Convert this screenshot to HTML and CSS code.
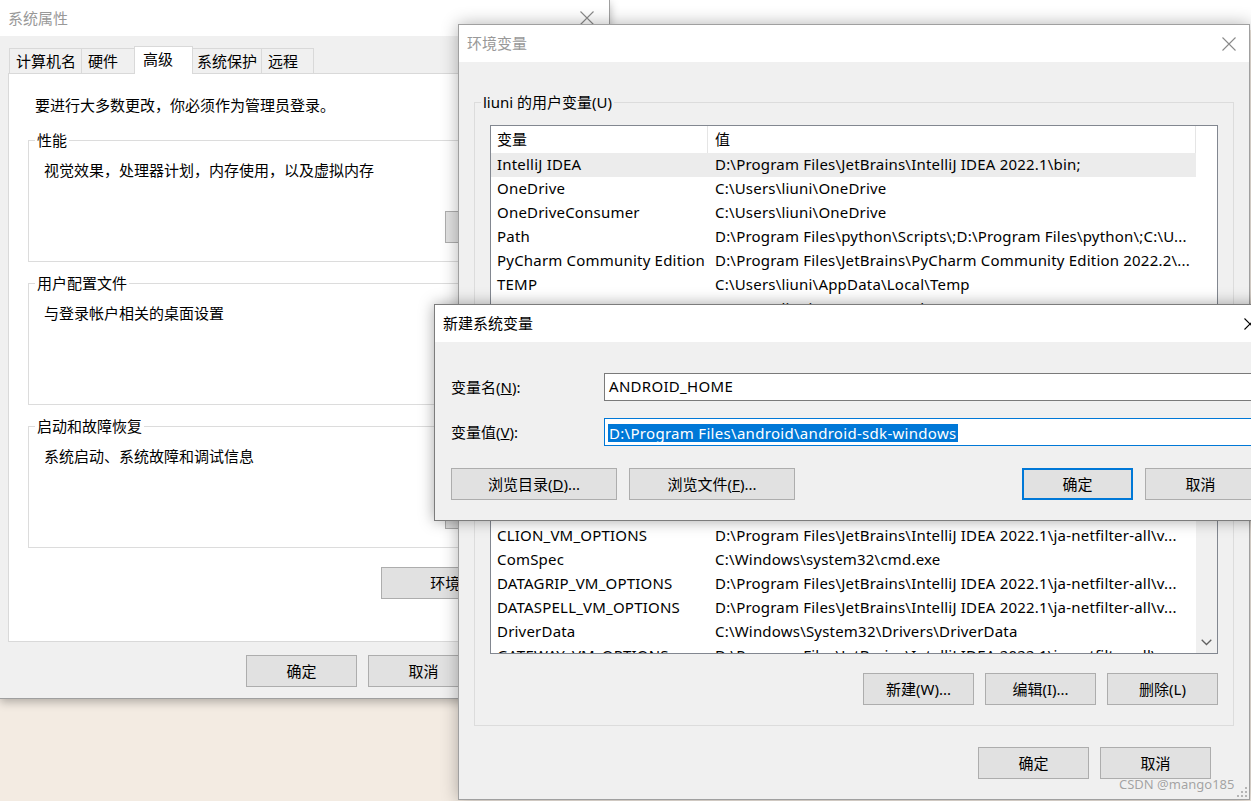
FILE: index.html
```html
<!DOCTYPE html>
<html lang="zh-CN">
<head>
<meta charset="utf-8">
<title>环境变量</title>
<link rel="stylesheet" href="styles.css">
</head>
<body>
<div class="backdrop-strip"></div>

<section class="win win-sys">
  <header class="titlebar tb-sys inactive">
    <span class="title">系统属性</span>
    <span class="close"><svg width="14" height="14" viewBox="0 0 14 14"><path d="M0.5 0.5L13.5 13.5M13.5 0.5L0.5 13.5" stroke="#8a8a8a" stroke-width="1.1" fill="none"/></svg></span>
  </header>
  <div class="sys-body">
    <nav class="tabs">
      <span class="tab tw1">计算机名</span>
      <span class="tab tw2">硬件</span>
      <span class="tab tab-sel">高级</span>
      <span class="tab tw4">系统保护</span>
      <span class="tab tw5">远程</span>
    </nav>
    <div class="tabpanel">
      <p class="note">要进行大多数更改，你必须作为管理员登录。</p>
      <fieldset class="group">
        <legend>性能</legend>
        <p class="gtext">视觉效果，处理器计划，内存使用，以及虚拟内存</p>
        <div class="gbtn-row"><button class="btn">设置(S)...</button></div>
      </fieldset>
      <fieldset class="group">
        <legend>用户配置文件</legend>
        <p class="gtext">与登录帐户相关的桌面设置</p>
        <div class="gbtn-row"><button class="btn">设置(E)...</button></div>
      </fieldset>
      <fieldset class="group group-last">
        <legend>启动和故障恢复</legend>
        <p class="gtext">系统启动、系统故障和调试信息</p>
        <div class="gbtn-row"><button class="btn">设置(T)...</button></div>
      </fieldset>
      <div class="env-row"><button class="btn btn-env">环境变量(N)...</button></div>
    </div>
    <div class="sys-buttons">
      <button class="btn">确定</button>
      <button class="btn">取消</button>
      <button class="btn">应用(A)</button>
    </div>
  </div>
</section>

<section class="win win-env">
  <header class="titlebar tb-env inactive">
    <span class="title">环境变量</span>
    <span class="close"><svg width="14" height="14" viewBox="0 0 14 14"><path d="M0.5 0.5L13.5 13.5M13.5 0.5L0.5 13.5" stroke="#8a8a8a" stroke-width="1.1" fill="none"/></svg></span>
  </header>
  <div class="env-body">
    <fieldset class="egroup eg-user">
      <legend>liuni 的用户变量(U)</legend>
      <div class="list list-user">
        <div class="lhead"><span class="c1">变量</span><span class="c2">值</span><span class="c3"></span></div>
        <div class="lbody">
          <div class="rows">
            <div class="row sel"><span class="c1">IntelliJ IDEA</span><span class="c2">D:\Program Files\JetBrains\IntelliJ IDEA 2022.1\bin;</span></div>
            <div class="row"><span class="c1">OneDrive</span><span class="c2">C:\Users\liuni\OneDrive</span></div>
            <div class="row"><span class="c1">OneDriveConsumer</span><span class="c2">C:\Users\liuni\OneDrive</span></div>
            <div class="row"><span class="c1">Path</span><span class="c2">D:\Program Files\python\Scripts\;D:\Program Files\python\;C:\U...</span></div>
            <div class="row"><span class="c1">PyCharm Community Edition</span><span class="c2">D:\Program Files\JetBrains\PyCharm Community Edition 2022.2\...</span></div>
            <div class="row"><span class="c1">TEMP</span><span class="c2">C:\Users\liuni\AppData\Local\Temp</span></div>
            <div class="row"><span class="c1">TMP</span><span class="c2">C:\Users\liuni\AppData\Local\Temp</span></div>
          </div>
          <div class="vscroll"></div>
        </div>
      </div>
      <div class="ebtn-row">
        <button class="btn">新建(N)...</button>
        <button class="btn">编辑(E)...</button>
        <button class="btn">删除(D)</button>
      </div>
    </fieldset>
    <fieldset class="egroup eg-sys">
      <legend>系统变量(S)</legend>
      <div class="list list-sys">
        <div class="lhead"><span class="c1">变量</span><span class="c2">值</span><span class="c3"></span></div>
        <div class="lbody">
          <div class="rows">
            <div class="row"><span class="c1">ChocolateyInstall</span><span class="c2">C:\ProgramData\chocolatey</span></div>
            <div class="row"><span class="c1">CLASSPATH</span><span class="c2">.;%JAVA_HOME%\lib;%JAVA_HOME%\lib\tools.jar</span></div>
            <div class="row"><span class="c1">CLION_VM_OPTIONS</span><span class="c2">D:\Program Files\JetBrains\IntelliJ IDEA 2022.1\ja-netfilter-all\v...</span></div>
            <div class="row"><span class="c1">ComSpec</span><span class="c2">C:\Windows\system32\cmd.exe</span></div>
            <div class="row"><span class="c1">DATAGRIP_VM_OPTIONS</span><span class="c2">D:\Program Files\JetBrains\IntelliJ IDEA 2022.1\ja-netfilter-all\v...</span></div>
            <div class="row"><span class="c1">DATASPELL_VM_OPTIONS</span><span class="c2">D:\Program Files\JetBrains\IntelliJ IDEA 2022.1\ja-netfilter-all\v...</span></div>
            <div class="row"><span class="c1">DriverData</span><span class="c2">C:\Windows\System32\Drivers\DriverData</span></div>
            <div class="row"><span class="c1">GATEWAY_VM_OPTIONS</span><span class="c2">D:\Program Files\JetBrains\IntelliJ IDEA 2022.1\ja-netfilter-all\v...</span></div>
          </div>
          <div class="vscroll vscroll-sys">
            <svg class="chev" width="11" height="7" viewBox="0 0 11 7"><path d="M0.7 0.7L5.5 5.5L10.3 0.7" stroke="#606060" stroke-width="1.3" fill="none"/></svg>
          </div>
        </div>
      </div>
      <div class="ebtn-row">
        <button class="btn">新建(W)...</button>
        <button class="btn">编辑(I)...</button>
        <button class="btn">删除(L)</button>
      </div>
    </fieldset>
    <div class="ok-row">
      <button class="btn">确定</button>
      <button class="btn">取消</button>
    </div>
  </div>
  <span class="grip"><svg width="12" height="12" viewBox="0 0 12 12"><g fill="#b5b5b5"><rect x="9" y="1" width="2" height="2"/><rect x="5" y="5" width="2" height="2"/><rect x="9" y="5" width="2" height="2"/><rect x="1" y="9" width="2" height="2"/><rect x="5" y="9" width="2" height="2"/><rect x="9" y="9" width="2" height="2"/></g></svg></span>
</section>

<section class="win dlg">
  <header class="titlebar tb-dlg">
    <span class="title">新建系统变量</span>
    <span class="close"><svg width="12" height="12" viewBox="0 0 12 12"><path d="M0.5 0.5L11.5 11.5M11.5 0.5L0.5 11.5" stroke="#000" stroke-width="1.1" fill="none"/></svg></span>
  </header>
  <div class="dlg-body">
    <div class="field">
      <label class="flabel">变量名(<span class="ak">N</span>):</label>
      <div class="input">ANDROID_HOME</div>
    </div>
    <div class="field field2">
      <label class="flabel">变量值(<span class="ak">V</span>):</label>
      <div class="input input-focus"><span class="selection">D:\Program Files\android\android-sdk-windows</span></div>
    </div>
    <div class="dlg-btns">
      <button class="btn btn-wide">浏览目录(<span class="ak">D</span>)...</button>
      <button class="btn btn-wide">浏览文件(<span class="ak">F</span>)...</button>
      <span class="spacer"></span>
      <button class="btn btn-default">确定</button>
      <button class="btn">取消</button>
    </div>
  </div>
</section>

<div class="watermark">CSDN @mango185</div>
</body>
</html>
```

FILE: styles.css
```css
* { box-sizing: border-box; }
html, body { margin: 0; padding: 0; }
body {
  width: 1251px;
  height: 801px;
  overflow: hidden;
  position: relative;
  background: #f3ebe2;
  font-family: "Noto Sans", "Noto Sans CJK SC", sans-serif;
  font-size: 15px;
  color: #000;
}
p { margin: 0; }
button {
  font-family: inherit;
  font-size: 15px;
  color: #000;
}
.ak { text-decoration: underline; }

.backdrop-strip {
  position: absolute;
  left: 610px;
  top: 0;
  width: 641px;
  height: 30px;
  background: #fff;
}

/* ---------- windows ---------- */
.win {
  position: absolute;
  background: #f0f0f0;
  display: flex;
  flex-direction: column;
}
.titlebar {
  flex: none;
  background: #fff;
  display: flex;
  align-items: center;
  justify-content: space-between;
  padding-left: 8px;
  line-height: 20px;
}
.titlebar.inactive .title { color: #999; }
.close {
  width: 46px;
  height: 100%;
  display: flex;
  align-items: center;
  justify-content: center;
}

.btn {
  width: 111px;
  height: 32px;
  padding: 0;
  background: #e1e1e1;
  border: 1px solid #adadad;
  line-height: 20px;
  flex: none;
}

/* ---------- System properties ---------- */
.win-sys {
  left: 0;
  top: 0;
  width: 610px;
  height: 699px;
  border-right: 1px solid #9f9f9f;
  border-bottom: 1px solid #9f9f9f;
  box-shadow: 0 3px 9px rgba(0, 0, 0, 0.28);
  z-index: 1;
}
.tb-sys { height: 36px; }
.tb-sys .close { width: 44px; }
.sys-body {
  flex: 1;
  display: flex;
  flex-direction: column;
  padding-top: 10px;
}
.tabs {
  display: flex;
  align-items: flex-end;
  height: 27px;
  padding-left: 9px;
}
.tab {
  height: 25px;
  line-height: 24px;
  padding-left: 6px;
  border: 1px solid #d9d9d9;
  border-bottom: none;
  margin-left: -1px;
  background: #f0f0f0;
  white-space: nowrap;
}
.tabs .tab:first-child { margin-left: 0; }
.tw1 { width: 73px; }
.tw2 { width: 54px; }
.tw4 { width: 70px; padding-left: 4px; }
.tw5 { width: 53px; }
.tab-sel {
  width: 59px;
  height: 28px;
  line-height: 25px;
  padding-left: 8px;
  background: #fff;
  margin-bottom: -1px;
  position: relative;
  z-index: 1;
}
.tabpanel {
  margin: 0 8px;
  height: 569px;
  background: #fff;
  border: 1px solid #d9d9d9;
  padding: 21px 19px 0 19px;
  display: flex;
  flex-direction: column;
}
.note {
  line-height: 20px;
  margin-left: 7px;
}
.group {
  margin: 15px 0 0 0;
  padding: 10px 24px 18px 15px;
  border: 1px solid #dcdcdc;
  min-inline-size: 0;
  height: 132px;
  display: flex;
  flex-direction: column;
}
.group + .group { margin-top: 11px; }
.group legend,
.egroup legend {
  padding: 0 2px;
  margin-left: -9px;
  line-height: 20px;
}
.gtext { line-height: 20px; }
.gbtn-row {
  display: flex;
  justify-content: flex-end;
  margin-top: 31px;
}
.env-row {
  display: flex;
  justify-content: flex-end;
  margin-top: 19px;
  padding-right: 9px;
}
.btn-env { width: 191px; }
.sys-buttons {
  display: flex;
  justify-content: flex-end;
  gap: 11px;
  padding-right: 8px;
  margin-top: 13px;
}

/* ---------- Environment variables ---------- */
.win-env {
  left: 458px;
  top: 24px;
  width: 792px;
  height: 776px;
  border: 1px solid #a0a0a0;
  box-shadow: 0 0 16px rgba(0, 0, 0, 0.3);
  z-index: 2;
}
.tb-env { height: 37px; }
.tb-env .close { width: 40px; }
.tb-env .title { margin-top: -2px; }
.env-body {
  flex: 1;
  display: flex;
  flex-direction: column;
  padding: 30px 15px 0 15px;
}
.egroup {
  margin: 0;
  border: 1px solid #dcdcdc;
  padding: 13px 15px 20px 15px;
  min-inline-size: 0;
  display: flex;
  flex-direction: column;
}
.eg-sys { margin-top: 10px; padding-top: 15px; }
.list {
  border: 1px solid #828790;
  background: #fff;
  display: flex;
  flex-direction: column;
  overflow: hidden;
}
.list-user { height: 206px; }
.list-sys { height: 206px; }
.lhead {
  display: flex;
  height: 27px;
  line-height: 27px;
  flex: none;
}
.lhead .c1 { border-right: 1px solid #e5e5e5; }
.lhead .c2 { border-right: 1px solid #e5e5e5; }
.c1 {
  width: 217px;
  padding-left: 6px;
  white-space: nowrap;
  overflow: hidden;
  flex: none;
}
.c2 {
  width: 488px;
  padding-left: 7px;
  white-space: nowrap;
  overflow: hidden;
  flex: none;
}
.c3 { flex: 1; }
.lbody {
  flex: 1;
  display: flex;
  min-height: 0;
}
.rows {
  width: 705px;
  flex: none;
}
.row {
  display: flex;
  height: 24px;
  line-height: 23px;
  padding-bottom: 1px;
  letter-spacing: 0.2px;
}
.row.sel { background: #ececec; }
.vscroll {
  flex: 1;
  display: flex;
  flex-direction: column;
  justify-content: flex-end;
  align-items: center;
}
.vscroll-sys { background: #f0f0f0; padding-bottom: 7px; }
.ebtn-row {
  display: flex;
  justify-content: flex-end;
  gap: 11px;
  margin-top: 19px;
}
.ok-row {
  display: flex;
  justify-content: flex-end;
  gap: 11px;
  margin-top: 21px;
  padding-right: 23px;
}
.grip {
  position: absolute;
  right: 1px;
  bottom: 1px;
  line-height: 0;
}

/* ---------- New system variable dialog ---------- */
.dlg {
  left: 434px;
  top: 304px;
  width: 840px;
  height: 217px;
  border: 1px solid #7c7c7c;
  box-shadow: 0 0 14px rgba(0, 0, 0, 0.35);
  z-index: 3;
}
.tb-dlg { height: 37px; }
.tb-dlg .title { margin-top: -2px; }
.tb-dlg .close { width: 46px; }
.dlg-body {
  flex: 1;
  padding: 31px 17px 0 16px;
  display: flex;
  flex-direction: column;
}
.field {
  display: flex;
  align-items: center;
  height: 28px;
}
.field2 { margin-top: 17px; }
.flabel {
  width: 153px;
  flex: none;
  line-height: 20px;
  margin-top: -1px;
}
.input {
  flex: 1;
  height: 28px;
  background: #fff;
  border: 1px solid #7a7a7a;
  padding-left: 4px;
  line-height: 25px;
  white-space: nowrap;
  letter-spacing: 0.3px;
}
.input-focus {
  border-color: #0078d7;
  padding-left: 3px;
}
.selection {
  background: #0078d7;
  color: #fff;
  line-height: 18px;
  display: inline-block;
  vertical-align: middle;
  padding: 0 1px;
}
.dlg-btns {
  display: flex;
  gap: 12px;
  margin-top: 22px;
}
.btn-wide { width: 166px; }
.spacer { flex: 1; }
.btn-default { border: 2px solid #0078d7; }

.watermark {
  position: absolute;
  left: 1119px;
  top: 774px;
  font-size: 13px;
  line-height: 20px;
  color: #a3a3a3;
  z-index: 4;
  text-shadow: 0 0 1px rgba(255, 255, 255, 0.8);
}
```
